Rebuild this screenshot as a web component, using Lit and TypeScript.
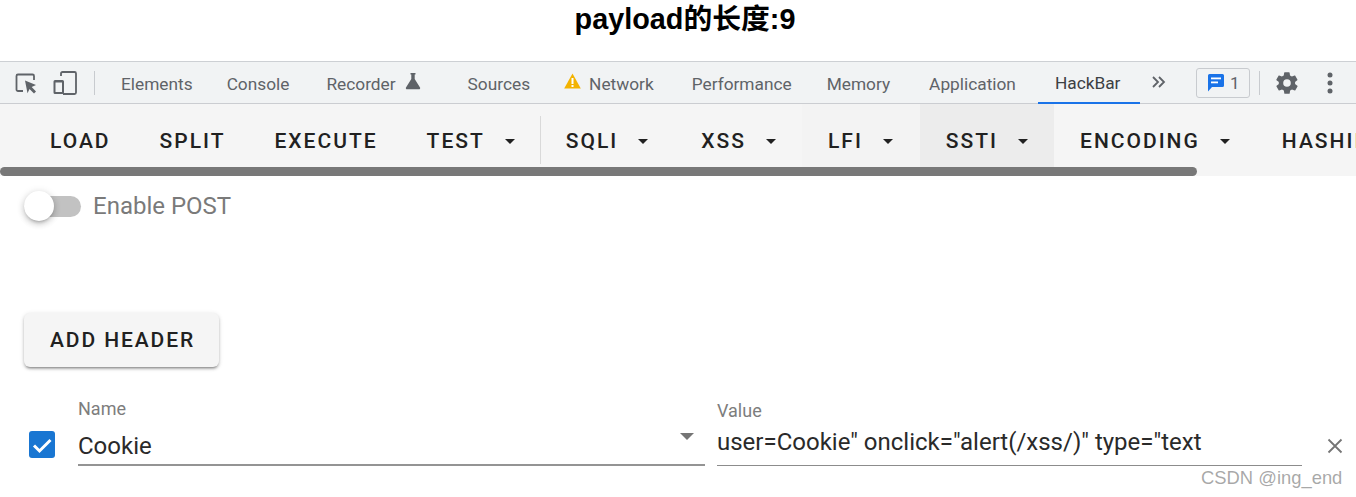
import { LitElement, html, css } from "lit";
import { customElement } from "lit/decorators.js";

const caret = html`<span class="caret"></span>`;

@customElement("app-root")
export class AppRoot extends LitElement {
  static styles = css`
    :host { display: block; width: 1356px; height: 497px; overflow: hidden; position: relative; background: #fff; font-family: Roboto, "Noto Sans", sans-serif; }
    * { box-sizing: border-box; }
    .title { height: 61px; padding: 1px 0 0 14px; text-align: center; font: 700 28.8px/36px "Liberation Sans", "Noto Sans CJK SC", sans-serif; color: #000; }
    .tabs { height: 43px; display: flex; align-items: center; background: #f1f3f4; border-top: 1px solid #cdd0d4; border-bottom: 1px solid #cbcdd1; font-size: 17.3px; color: #5f6368; padding-left: 14px; white-space: nowrap; }
    .tabs svg { display: block; flex: none; }
    .t { display: flex; align-items: center; height: 100%; padding-top: 2px; }
    .sep { width: 1px; height: 24px; background: #c8cbcf; flex: none; }
    .i-cursor { margin-top: 1px; }
    .i-device { margin-left: 15px; }
    .sep1 { margin-left: 17px; }
    .t-el { margin-left: 26px; }
    .t-co { margin-left: 34px; }
    .t-re { margin-left: 37px; }
    .i-flask { margin: -4px 0 0 9px; }
    .t-so { margin-left: 47px; }
    .i-warn { margin: -3px 0 0 34px; }
    .t-ne { margin-left: 8px; }
    .t-pe { margin-left: 38px; }
    .t-me { margin-left: 35px; }
    .t-ap { margin-left: 39px; }
    .i-more { margin: -1px 0 0 11px; }
    .sep2 { margin-left: 9px; }
    .i-gear { margin-left: 14px; }
    .i-dots { margin-left: 27px; }
    .active { height: 100%; padding: 2px 17px 0 17px; margin-left: 22px; width: 102px; border-bottom: 2px solid #1a73e8; margin-bottom: -1px; color: #3c4043; display: flex; align-items: center; flex: none; }
    .badge { width: 54px; height: 30px; margin-left: 29px; border: 1px solid #c8cbcf; border-radius: 3px; display: flex; align-items: center; padding-left: 10px; gap: 5px; color: #5f6368; font-size: 17px; flex: none; }
    .bar { height: 72px; position: relative; overflow: hidden; background: #f5f5f5; display: flex; padding-left: 25px; white-space: nowrap; color: #212121; font-size: 21px; font-weight: 480; letter-spacing: 2px; }
    .b { display: flex; align-items: center; height: 74px; padding: 0 24px 0 25px; flex: none; }
    .b.test { padding-right: 25px; }
    .b.sqli { padding-right: 28px; }
    .b.xss { padding-right: 26px; }
    .b.lfi { background: #f3f3f3; padding: 0 27px 0 26px; }
    .b.ssti { background: #ececec; padding: 0 26px 0 26px; }
    .b.enc { padding: 0 27px 0 26px; }
    .caret { width: 0; height: 0; border-left: 5px solid transparent; border-right: 5px solid transparent; border-top: 5px solid currentColor; margin-left: 20px; flex: none; }
    .vr { width: 1px; height: 48px; margin-top: 12px; background: #d9d9d9; flex: none; }
    .thumb { position: absolute; left: 0; top: 63px; width: 1197px; height: 9px; border-radius: 5px; background: #787878; }
    .sw { display: flex; align-items: center; height: 60px; padding-left: 24px; }
    .track { width: 57px; height: 21px; border-radius: 11px; background: #c2c2c2; position: relative; flex: none; }
    .knob { position: absolute; left: 0; top: -5px; width: 30px; height: 30px; border-radius: 50%; background: #fff; box-shadow: 0 3px 3px -2px rgba(0,0,0,.2), 0 3px 6px 0 rgba(0,0,0,.16), 0 1px 8px 0 rgba(0,0,0,.12); }
    .swl { margin-left: 12px; font-size: 24px; color: #7a7a7a; }
    .add { margin: 77px 0 0 24px; width: 195px; height: 54px; border-radius: 6px; background: #f5f5f5; color: #212121; display: flex; align-items: center; padding-left: 26px; font-size: 21px; font-weight: 480; letter-spacing: 1.9px; box-shadow: 0 3px 2px -2px rgba(0,0,0,.25), 0 2px 3px 0 rgba(0,0,0,.2), 0 1px 5px 0 rgba(0,0,0,.12); }
    .row { display: flex; margin-top: 31px; }
    .ck { width: 26px; height: 27px; margin: 33px 0 0 29px; background: #1976d2; border-radius: 3px; flex: none; display: flex; align-items: center; justify-content: center; }
    .f { position: relative; flex: none; }
    .name { width: 627px; margin-left: 23px; height: 68px; border-bottom: 2px solid #949494; }
    .val { width: 585px; margin-left: 12px; height: 68px; border-bottom: 1px solid #8c8c8c; }
    .lab { font-size: 18px; line-height: 21px; color: #7d7d7d; }
    .name .lab { height: 22px; }
    .val .lab { padding-top: 2px; height: 24px; }
    .txt { font-size: 24px; color: #2a2a2a; line-height: 28px; white-space: nowrap; }
    .name .txt { margin-top: 12px; }
    .val .txt { margin-top: 6px; }
    .arrow { position: absolute; right: 11px; top: 35px; width: 0; height: 0; border-left: 7px solid transparent; border-right: 7px solid transparent; border-top: 7px solid #757575; }
    .x { margin: 40px 0 0 25px; flex: none; }
    .wm { position: absolute; left: 1201px; top: 466px; font: 18.4px/24px "Liberation Sans", sans-serif; color: rgba(110,110,110,.6); }
  `;

  render() {
    return html`
      <div class="title">payload的长度:9</div>
      <div class="tabs">
        <svg class="i-cursor" width="24" height="24" viewBox="0 0 24 24"><path d="M9 20H4a1.500 1.500 0 0 1-1.500-1.500V5A1.500 1.500 0 0 1 4 3.500h14.500A1.500 1.500 0 0 1 20 5v4" fill="none" stroke="#5f6368" stroke-width="1.800"/><path d="M11 9.500 22 14l-4.300 2 4.300 4.500-2 2-4.500-4.500-2 4.300z" fill="#5f6368"/></svg>
        <svg class="i-device" width="24" height="24" viewBox="0 0 24 24"><path d="M8 5V2.500A1.500 1.500 0 0 1 9.500 1h12A1.500 1.500 0 0 1 23 2.500v19a1.500 1.500 0 0 1-1.500 1.500H10" fill="none" stroke="#5f6368" stroke-width="1.800"/><path d="M2 9h7.500A1.500 1.500 0 0 1 11 10.500V21.500A1.500 1.500 0 0 1 9.500 23H2A1.500 1.500 0 0 1 .5 21.500V10.500A1.500 1.500 0 0 1 2 9z" fill="#5f6368"/><rect x="2.500" y="11.500" width="6.500" height="9.500" fill="#f1f3f4"/></svg>
        <span class="sep sep1"></span>
        <span class="t t-el">Elements</span>
        <span class="t t-co">Console</span>
        <span class="t t-re">Recorder</span>
        <svg class="i-flask" width="16" height="18" viewBox="0 0 16 18"><path d="M5.500 1h5v1.500h-.800V7L15 15.500A1.200 1.200 0 0 1 14 17.300H2A1.200 1.200 0 0 1 1 15.500L6.300 7V2.500h-.800z" fill="#5f6368"/></svg>
        <span class="t t-so">Sources</span>
        <svg class="i-warn" width="17" height="16" viewBox="0 0 17 16"><path d="M8.500.5 16.800 15.500H.2z" fill="#f3b300"/><rect x="7.500" y="5" width="2" height="6" fill="#fff"/><rect x="7.500" y="12" width="2" height="2" fill="#fff"/></svg>
        <span class="t t-ne">Network</span>
        <span class="t t-pe">Performance</span>
        <span class="t t-me">Memory</span>
        <span class="t t-ap">Application</span>
        <span class="active">HackBar</span>
        <svg class="i-more" width="16" height="14" viewBox="0 0 16 14"><path d="M2 2l5 5-5 5M8 2l5 5-5 5" fill="none" stroke="#5f6368" stroke-width="1.800"/></svg>
        <div class="badge">
          <svg width="18" height="20" viewBox="0 0 18 20"><path d="M2.500 1h13A1.500 1.500 0 0 1 17 2.500v10a1.500 1.500 0 0 1-1.500 1.500H5l-4 4.500V2.500A1.500 1.500 0 0 1 2.500 1z" fill="#1a73e8"/><rect x="4" y="4.500" width="10" height="1.800" fill="#fff"/><rect x="4" y="8.500" width="7" height="1.800" fill="#fff"/></svg>
          <span>1</span>
        </div>
        <span class="sep sep2"></span>
        <svg class="i-gear" width="26" height="26" viewBox="0 0 24 24"><path fill="#5f6368" d="M19.400 13c.1-.3.100-.7.100-1s0-.7-.1-1l2.100-1.600c.2-.2.200-.4.100-.6l-2-3.500c-.1-.2-.4-.3-.6-.2l-2.500 1c-.5-.4-1.100-.7-1.700-1l-.4-2.600c0-.3-.2-.5-.5-.5h-4c-.3 0-.5.200-.5.500l-.4 2.600c-.6.300-1.200.6-1.700 1l-2.500-1c-.2-.1-.5 0-.6.200l-2 3.500c-.1.200-.1.400.1.600L4.500 11c-.1.300-.1.700-.1 1s0 .7.100 1l-2.100 1.600c-.2.200-.2.400-.1.600l2 3.500c.1.200.4.300.6.200l2.500-1c.5.400 1.100.7 1.700 1l.4 2.600c0 .3.200.5.500.5h4c.3 0 .5-.2.500-.5l.4-2.600c.6-.3 1.200-.6 1.700-1l2.500 1c.2.100.5 0 .6-.2l2-3.500c.1-.2.100-.4-.1-.6zM12 15.500a3.500 3.500 0 1 1 0-7 3.500 3.500 0 0 1 0 7z"/></svg>
        <svg class="i-dots" width="6" height="22" viewBox="0 0 6 22"><circle cx="3" cy="3" r="2.500" fill="#5f6368"/><circle cx="3" cy="11" r="2.500" fill="#5f6368"/><circle cx="3" cy="19" r="2.500" fill="#5f6368"/></svg>
      </div>
      <div class="bar">
        <div class="b">LOAD</div>
        <div class="b">SPLIT</div>
        <div class="b">EXECUTE</div>
        <div class="b test">TEST${caret}</div>
        <div class="vr"></div>
        <div class="b sqli">SQLI${caret}</div>
        <div class="b xss">XSS${caret}</div>
        <div class="b lfi">LFI${caret}</div>
        <div class="b ssti">SSTI${caret}</div>
        <div class="b enc">ENCODING${caret}</div>
        <div class="b">HASHING</div>
        <div class="thumb"></div>
      </div>
      <div class="sw"><div class="track"><div class="knob"></div></div><span class="swl">Enable POST</span></div>
      <div class="add">ADD HEADER</div>
      <div class="row">
        <div class="ck"><svg width="24" height="24" viewBox="0 0 24 24"><path d="M4 12.500l5.500 5.500L20.500 7" fill="none" stroke="#fff" stroke-width="3"/></svg></div>
        <div class="f name"><div class="lab">Name</div><div class="txt">Cookie</div><span class="arrow"></span></div>
        <div class="f val"><div class="lab">Value</div><div class="txt">user=Cookie" onclick="alert(/xss/)" type="text</div></div>
        <svg class="x" width="16" height="16" viewBox="0 0 16 16"><path d="M1.500 1.500l13 13M14.500 1.500l-13 13" stroke="#757575" stroke-width="1.800" fill="none"/></svg>
      </div>
      <div class="wm">CSDN @ing_end</div>
    `;
  }
}
